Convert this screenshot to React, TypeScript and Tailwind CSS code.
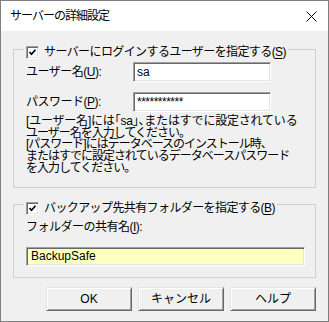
import React from 'react';

const Sunken: React.FC<{ className?: string; children?: React.ReactNode }> = ({ className = '', children }) => (
  <div
    className={`border border-t-[#a0a0a0] border-l-[#a0a0a0] border-b-white border-r-white shadow-[inset_1px_1px_0_#696969,inset_-1px_-1px_0_#e3e3e3] ${className}`}
  >
    {children}
  </div>
);

const CheckBox: React.FC = () => (
  <Sunken className="w-[13px] h-[13px] bg-white shrink-0 flex items-center justify-center">
    <svg width="9" height="9" viewBox="0 0 9 9">
      <polyline points="1.5,4 3.5,6.2 7.5,1.8" fill="none" stroke="#000" strokeWidth="1.7" />
    </svg>
  </Sunken>
);

const Btn: React.FC<{ children: React.ReactNode }> = ({ children }) => (
  <button className="w-[86px] h-[24px] bg-[#f0f0f0] border border-t-[#e3e3e3] border-l-[#e3e3e3] border-b-[#696969] border-r-[#696969] shadow-[inset_1px_1px_0_#fff,inset_-1px_-1px_0_#a0a0a0] text-[12px] leading-[12px] text-black">
    {children}
  </button>
);

export default function App() {
  return (
    <div className="w-[329px] h-[322px] border border-[#7f7f7f] bg-[#f0f0f0] flex flex-col text-black text-[12px] leading-[13px] font-['Liberation_Sans','Noto_Sans_CJK_JP',sans-serif] [font-feature-settings:'halt']">
      {/* title bar */}
      <div className="h-[30px] bg-white flex items-center justify-between pl-[9px] pr-[11px] shrink-0">
        <span className="tracking-[-1px]">サーバーの詳細設定</span>
        <svg width="11" height="11" viewBox="0 0 11 11">
          <path d="M0.5 0.5 L10.5 10.5 M10.5 0.5 L0.5 10.5" stroke="#000" strokeWidth="1" />
        </svg>
      </div>

      {/* login group */}
      <fieldset className="mx-[12px] mt-[8px] border border-[#d0d0d0] p-0 min-w-0">
        <legend className="ml-[10px] px-[2px] h-[20px] pt-[7px]">
          <div className="flex items-start gap-[5px]">
            <CheckBox />
            <span className="whitespace-nowrap tracking-[-0.6px]">
              サーバーにログインするユーザーを指定する(<u className="underline-offset-2">S</u>)
            </span>
          </div>
        </legend>
        <div className="pl-[12px] pb-[12px]">
          <div className="mt-[3px] flex items-center">
            <span className="w-[107px] shrink-0 tracking-[-0.5px]">
              ユーザー名(<u className="underline-offset-2">U</u>):
            </span>
            <Sunken className="w-[138px] h-[20px] bg-white flex items-center pl-[3px]">sa</Sunken>
          </div>
          <div className="mt-[10px] flex items-center">
            <span className="w-[107px] shrink-0 tracking-[-0.5px]">
              パスワード(<u className="underline-offset-2">P</u>):
            </span>
            <Sunken className="w-[138px] h-[20px] bg-white flex items-center pl-[3px] tracking-[-0.5px]">***********</Sunken>
          </div>
          <div className="mt-[4px] leading-[11.7px] tracking-[-1px]">
            <div className="tracking-[-0.2px]">[ユーザー名]には「sa」、またはすでに設定されている</div>
            <div>ユーザー名を入力してください。</div>
            <div>[パスワード]にはデータベースのインストール時、</div>
            <div>またはすでに設定されているデータベースパスワード</div>
            <div>を入力してください。</div>
          </div>
        </div>
      </fieldset>

      {/* backup group */}
      <fieldset className="mx-[12px] mt-[7px] border border-[#d0d0d0] p-0 min-w-0">
        <legend className="ml-[10px] px-[2px] h-[20px] pt-[7px]">
          <div className="flex items-start gap-[5px]">
            <CheckBox />
            <span className="whitespace-nowrap tracking-[-0.6px]">
              バックアップ先共有フォルダーを指定する(<u className="underline-offset-2">B</u>)
            </span>
          </div>
        </legend>
        <div className="pl-[12px] pb-[11px]">
          <div className="mt-[6px] h-[12px] leading-[12px] tracking-[-0.5px]">
            フォルダーの共有名(<u className="underline-offset-2">I</u>):
          </div>
          <Sunken className="mt-[14px] w-[279px] h-[19px] bg-[#ffffc0] flex items-center pl-[4px]">BackupSafe</Sunken>
        </div>
      </fieldset>

      {/* buttons */}
      <div className="mt-[9px] flex justify-end gap-[6px] pr-[12px]">
        <Btn>OK</Btn>
        <Btn>キャンセル</Btn>
        <Btn>ヘルプ</Btn>
      </div>
    </div>
  );
}
